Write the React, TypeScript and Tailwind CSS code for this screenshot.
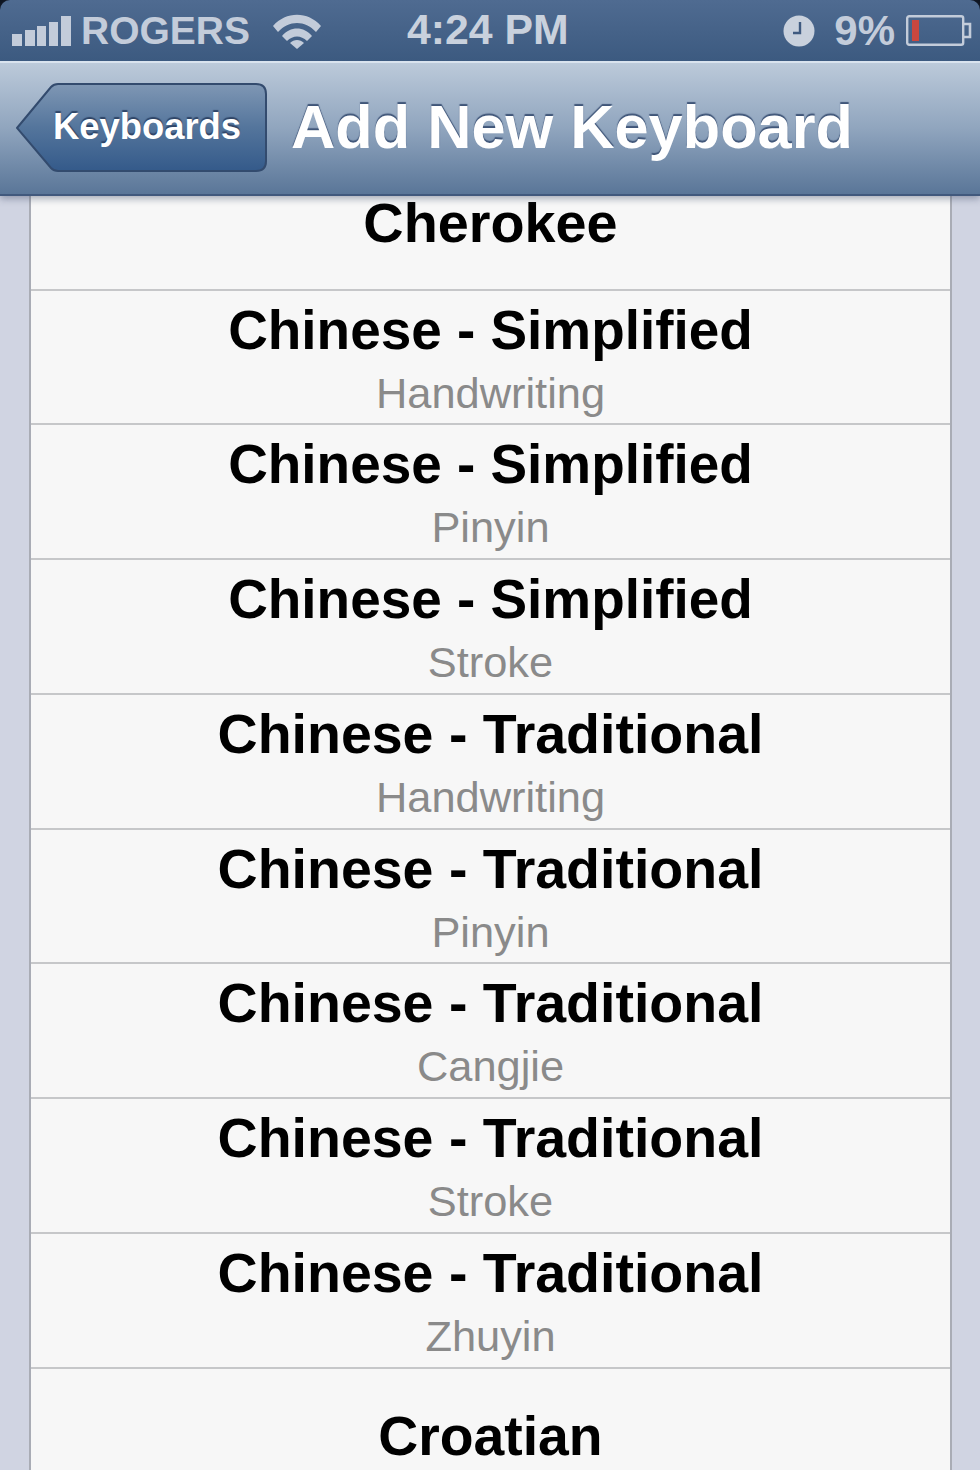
const sans = { fontFamily: '"Liberation Sans", Arial, sans-serif' }

type Row = { title: string; sub: string }

const rows: Row[] = [
  { title: 'Chinese - Simplified', sub: 'Handwriting' },
  { title: 'Chinese - Simplified', sub: 'Pinyin' },
  { title: 'Chinese - Simplified', sub: 'Stroke' },
  { title: 'Chinese - Traditional', sub: 'Handwriting' },
  { title: 'Chinese - Traditional', sub: 'Pinyin' },
  { title: 'Chinese - Traditional', sub: 'Cangjie' },
  { title: 'Chinese - Traditional', sub: 'Stroke' },
  { title: 'Chinese - Traditional', sub: 'Zhuyin' },
]

const SignalIcon = () => (
  <svg width="60" height="32" viewBox="0 0 60 32" className="shrink-0">
    <rect x="0" y="19" width="10" height="12" fill="#c3ccda" />
    <rect x="13" y="15" width="10" height="16" fill="#c3ccda" />
    <rect x="25" y="11" width="9" height="20" fill="#c3ccda" />
    <rect x="37" y="7" width="9" height="24" fill="#c3ccda" />
    <rect x="49" y="1" width="10" height="30" fill="#c3ccda" />
  </svg>
)

const WifiIcon = () => (
  <svg width="50" height="38" viewBox="0 0 50 38" className="shrink-0">
    <path d="M1 14 C14 -1 36 -1 49 14 L44 20 C33 8 17 8 6 20 Z" fill="#c3ccda" />
    <path d="M10 24 C18 14 32 14 40 24 L35 29 C29 23 21 23 15 29 Z" fill="#c3ccda" />
    <path d="M25 37 L18 31 C22 27 28 27 32 31 Z" fill="#c3ccda" />
  </svg>
)

const ClockIcon = () => (
  <svg width="32" height="32" viewBox="0 0 32 32" className="shrink-0">
    <circle cx="16" cy="16" r="15.5" fill="#c9d1dd" />
    <path d="M17 7 V18 H10" fill="none" stroke="#3f5a80" strokeWidth="2.4" />
  </svg>
)

const BatteryIcon = () => (
  <svg width="66" height="32" viewBox="0 0 66 32" className="shrink-0">
    <rect x="1.2" y="1.2" width="56" height="28.5" rx="2" fill="none" stroke="#c3ccda" strokeWidth="2.4" />
    <rect x="6" y="5" width="7" height="21" fill="#c9473f" />
    <path d="M58 9 H64 V22 H58" fill="none" stroke="#c3ccda" strokeWidth="2.6" />
  </svg>
)

const StatusBar = () => (
  <div className="relative flex h-[61px] items-center bg-gradient-to-b from-[#4f6b91] to-[#3c5a80]">
    <div className="ml-[12px] flex items-center">
      <SignalIcon />
      <span className="ml-[9px] text-[39px] leading-none font-bold text-[#c3ccda]" style={sans}>ROGERS</span>
      <span className="ml-[22px]"><WifiIcon /></span>
    </div>
    <span className="absolute left-[407px] top-[8px] text-[42.8px] leading-[42px] font-bold text-[#c9d1dd]" style={sans}>4:24 PM</span>
    <div className="ml-auto mr-[8px] flex items-center">
      <ClockIcon />
      <span className="ml-[19px] mr-[11px] text-[42px] leading-none font-bold text-[#c3ccda]" style={sans}>9%</span>
      <BatteryIcon />
    </div>
  </div>
)

const NavBar = () => (
  <div className="flex h-[135px] items-center border-t-2 border-b-2 border-t-[#d9e3ee] border-b-[#41597d] bg-gradient-to-b from-[#bccada] via-[#90a5be] to-[#5a7698] pb-[2px] pl-[16px]">
    <div className="relative h-[90px] w-[252px] shrink-0">
      <svg width="252" height="90" viewBox="0 0 252 90" className="absolute inset-0">
        <defs>
          <linearGradient id="back" x1="0" y1="0" x2="0" y2="1">
            <stop offset="0" stopColor="#7f97b4" />
            <stop offset="0.5" stopColor="#54759c" />
            <stop offset="1" stopColor="#345a8a" />
          </linearGradient>
        </defs>
        <path
          d="M1 45 L35 4 Q38 1 42 1 H240 Q250 1 250 11 V78 Q250 88 240 88 H42 Q38 88 35 85 Z"
          fill="url(#back)"
          stroke="#334b6e"
          strokeWidth="2"
        />
      </svg>
      <span
        className="absolute left-[37px] top-[24px] text-[36.4px] leading-[40px] font-bold text-white [text-shadow:0_-2px_1px_#2f4567]"
        style={sans}
      >
        Keyboards
      </span>
    </div>
    <h1
      className="ml-[23px] text-[61.3px] leading-none font-bold whitespace-nowrap text-white [text-shadow:0_-2px_1px_#3f5578]"
      style={sans}
    >
      Add New Keyboard
    </h1>
  </div>
)

const KeyboardRow = ({ title, sub }: Row) => (
  <div className="flex h-[134.75px] flex-col items-center border-b-2 border-[#c6c7c9]">
    <div
      className={title.includes('Simplified')
        ? 'mt-[8px] text-[54.9px] leading-[62px] font-bold text-black'
        : 'mt-[8px] text-[55.5px] leading-[62px] font-bold text-black'}
      style={sans}
    >
      {title}
    </div>
    <div className="mt-[9px] text-[43.4px] leading-[46px] text-[#8a8a8a]" style={sans}>{sub}</div>
  </div>
)

export default function App() {
  return (
    <div className="h-[1470px] w-[980px] overflow-hidden bg-[#0d1420]">
      <div className="relative z-10 rounded-t-[10px] shadow-[0_3px_7px_rgba(70,85,110,0.45)]">
        <div className="overflow-hidden rounded-t-[10px]">
          <StatusBar />
          <NavBar />
        </div>
      </div>
      <div className="flex h-[1274px] bg-[#d0d4e2]">
        <div className="w-[29px] shrink-0" />
        <div className="flex-1 border-x-2 border-[#a9acb5] bg-[#f7f7f7]">
          <div className="h-[94.6px] border-b-2 border-[#c6c7c9] text-center">
            <div className="text-[55.8px] leading-[54px] font-bold text-black" style={sans}>Cherokee</div>
          </div>
          {rows.map((r, i) => (
            <KeyboardRow key={i} title={r.title} sub={r.sub} />
          ))}
          <div className="pt-[36px] text-center text-[55.3px] leading-[62px] font-bold text-black" style={sans}>Croatian</div>
        </div>
        <div className="w-[28px] shrink-0" />
      </div>
    </div>
  )
}
